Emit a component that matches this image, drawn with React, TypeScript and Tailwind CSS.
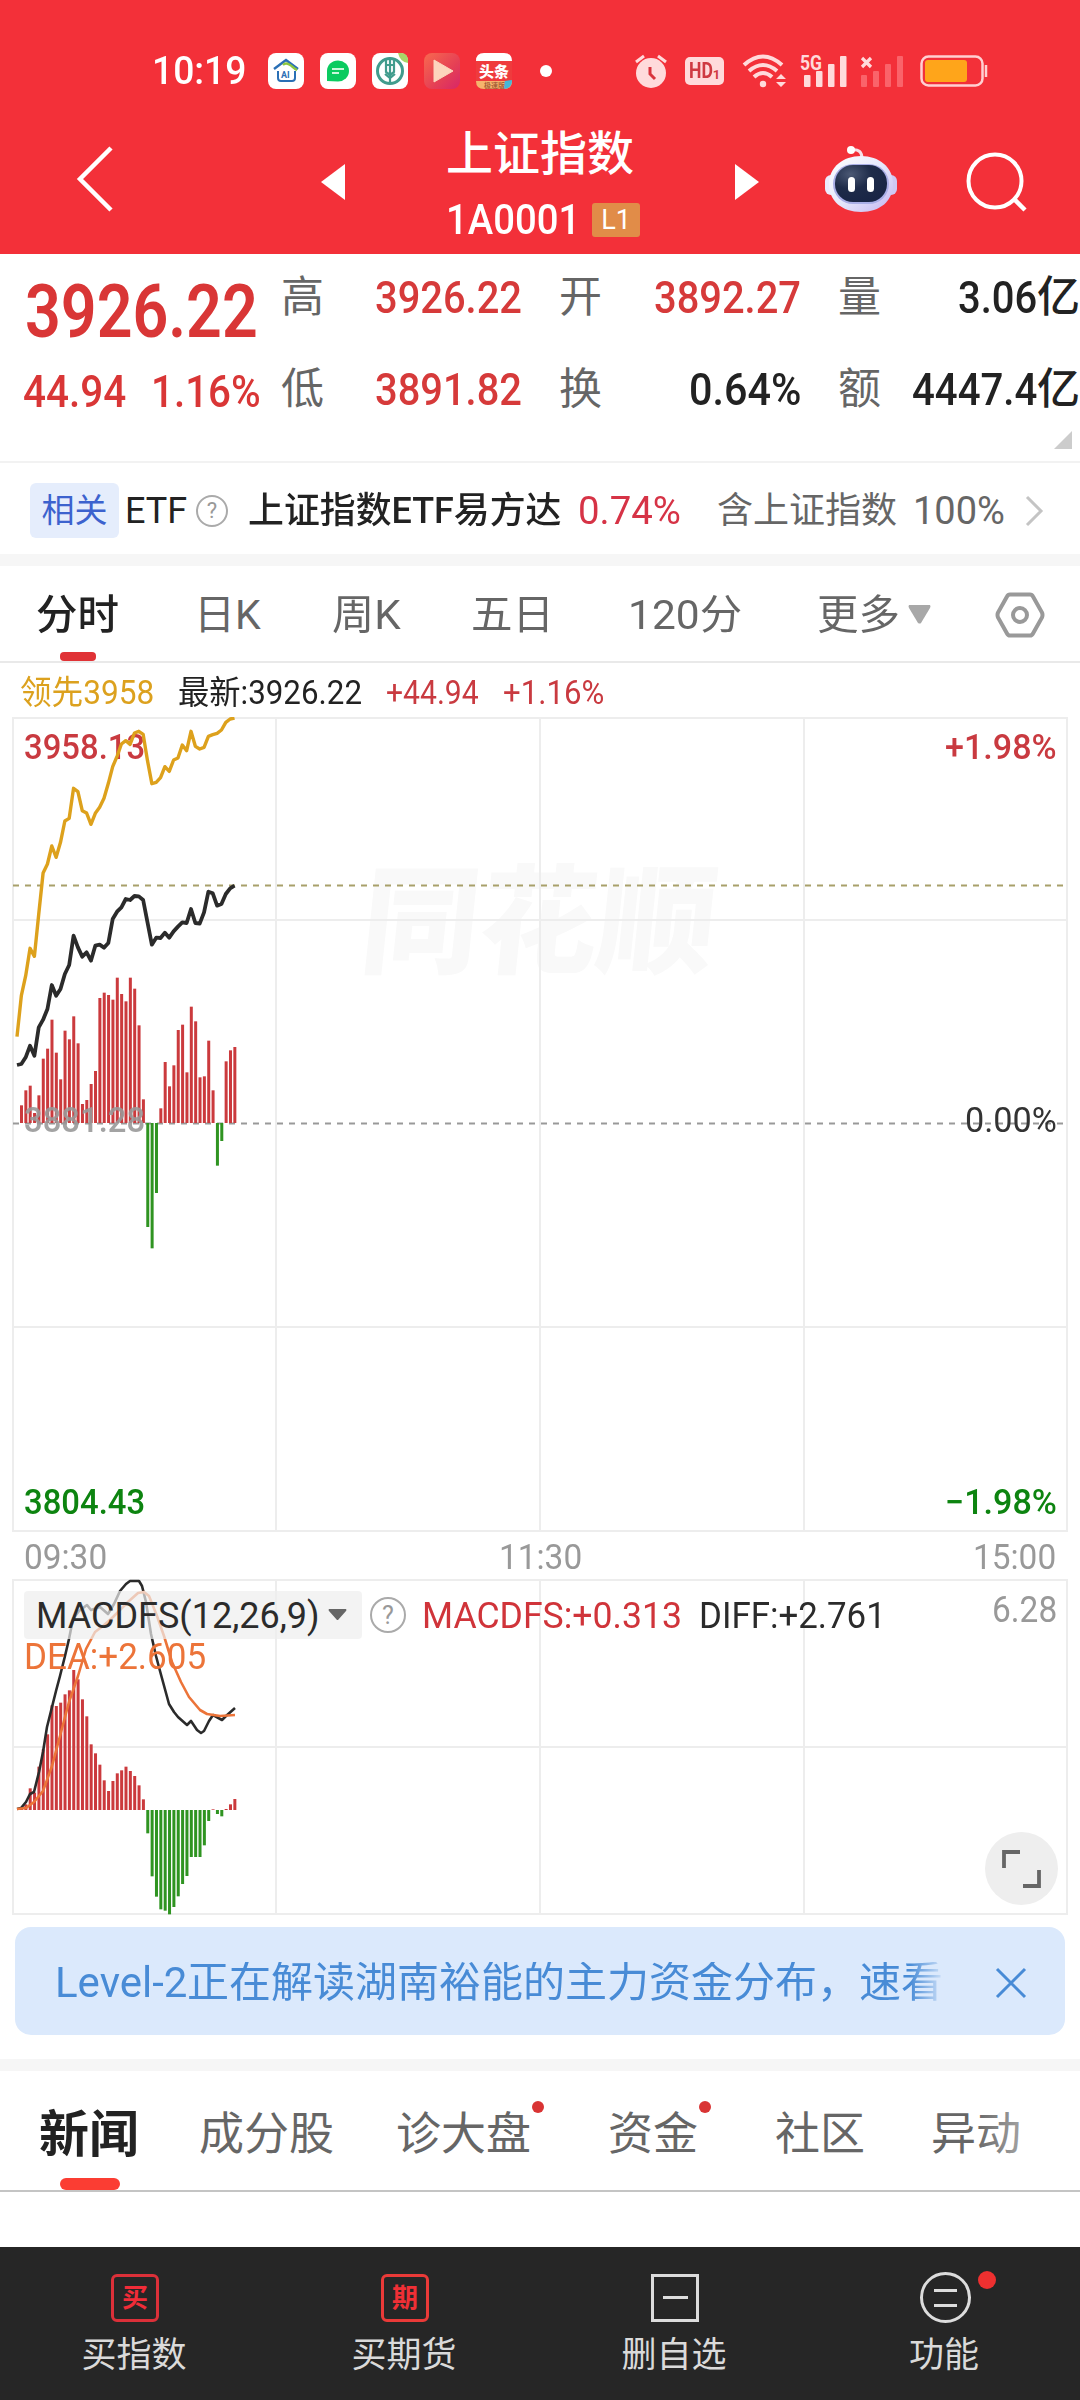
import { useLayoutEffect, useRef, useState } from 'react';
import type { ReactNode } from 'react';
import { clsx } from 'clsx';

// Minute lines, sampled once per minute from the left edge (3 units = 1px)
const LEAD = [
  1013, 890, 830, 748, 772, 645, 522, 495, 441, 475, 430, 366, 358, 268, 278, 335, 342, 376, 343, 325, 298, 253, 203, 172,
  135, 125, 136, 102, 97, 106, 185, 254, 250, 236, 203, 217, 183, 177, 138, 155, 97, 142, 150, 145, 112, 107, 103, 93, 70,
  60, 57,
];
const PRICE = [
  1098, 1095, 1075, 1040, 1070, 985, 962, 930, 858, 890, 870, 825, 798, 710, 745, 773, 760, 785, 740, 737, 746, 732, 660,
  638, 625, 600, 603, 591, 592, 603, 670, 737, 716, 717, 701, 716, 697, 683, 670, 672, 630, 672, 674, 640, 578, 583, 620,
  615, 585, 568, 560,
];
const FLOW = [
  53, 98, 112, 30, 83, 193, 223, 310, 211, 131, 277, 251, 320, 239, 57, 69, 117, 156, 375, 391, 384, 370, 436, 387, 365,
  436, 403, 293, 71, -312, -376, -210, 44, 183, 110, 173, 279, 295, 152, 349, 305, 137, 140, 247, 98, -128, -54, 185, 218,
  228,
];
const MACD = [
  7, 17, 65, 52, 130, 182, 227, 314, 312, 322, 347, 359, 420, 392, 332, 281, 197, 170, 136, 89, 57, 87, 110, 119, 130, 117,
  102, 74, 32, -70, -199, -260, -298, -302, -313, -291, -259, -222, -198, -141, -141, -141, -106, -33, 2, -12, -19, 3, 17,
  33,
];
const DIFF = [
  [17, 330], [21, 329], [26, 323], [30, 315], [34, 313], [39, 293], [43, 273], [47, 248], [52, 228], [56, 212], [60, 197],
  [65, 177], [69, 160], [73, 140], [79, 132], [87, 126], [91, 131], [100, 128], [108, 135], [114, 125], [120, 112],
  [126, 105], [130, 102], [139, 102], [142, 107], [146, 123], [151, 155], [156, 177], [160, 192], [169, 225], [174, 233],
  [178, 238], [187, 246], [191, 242], [197, 251], [201, 254], [204, 252], [209, 242], [213, 236], [222, 241], [226, 237],
  [235, 229],
];
const DEA = [
  [17, 330], [26, 329], [34, 323], [43, 312], [52, 287], [60, 257], [69, 223], [78, 197], [86, 170], [95, 153], [103, 147],
  [112, 139], [121, 130], [129, 122], [138, 114], [144, 113], [149, 117], [157, 137], [164, 157], [172, 183], [181, 203],
  [189, 218], [200, 231], [207, 235], [220, 237], [235, 236],
];

const minuteLine = (values: number[]) => values.map((v, i) => `${17 + i * 4.35},${v / 3 - 18}`).join(' ');

// Squeezes or stretches one line of text to the width of its box
function Fit({ className, children }: { className?: string; children: ReactNode }) {
  const box = useRef<HTMLSpanElement>(null);
  const text = useRef<HTMLSpanElement>(null);
  const [scale, setScale] = useState(1);

  useLayoutEffect(() => {
    if (box.current && text.current) {
      setScale(box.current.clientWidth / text.current.offsetWidth);
    }
  }, []);

  return (
    <span ref={box} className={clsx('inline-block shrink-0 whitespace-nowrap leading-none', className)}>
      <span ref={text} className="inline-block origin-left" style={{ transform: `scaleX(${scale})` }}>
        {children}
      </span>
    </span>
  );
}

function StatusBar() {
  return (
    <div className="flex h-[108px] items-center pt-[34px] pl-[152px]">
      <Fit className="w-[94px] text-[38px] font-medium">10:19</Fit>
      <div className="ml-[22px] flex gap-4">
        <svg className="size-9" viewBox="0 0 36 36" fill="none">
          <rect width="36" height="36" rx="8" fill="#fff" />
          <path d="M6 16 18 7l12 9" stroke="#2a6fb5" strokeWidth="2.4" />
          <path d="M15 12c3-3 5-1 7 0s4 4 7 5" stroke="#8cc63f" strokeWidth="2.4" />
          <path d="M10 18v7q0 3 3 3h11q3 0 3-3v-7" stroke="#2a6fb5" strokeWidth="2" />
          <text x="13" y="25" fontSize="9" fontWeight="700" fill="#2a6fb5">AI</text>
        </svg>
        <svg className="size-9" viewBox="0 0 36 36" fill="none">
          <rect width="36" height="36" rx="8" fill="#fff" />
          <path d="M7 28V18a11 10.500 0 1 1 11 10.500Z" fill="#0acb60" />
          <path d="M12 16h12M12 20h7" stroke="#c9f7dc" strokeWidth="2" />
        </svg>
        <svg className="size-9" viewBox="0 0 36 36" fill="none">
          <rect width="36" height="36" rx="8" fill="#fff" />
          <circle cx="18" cy="18" r="12.500" stroke="#419c8d" strokeWidth="3" />
          <path d="M18 4v27M14 5v14l4 3 4-3V5M13 21l5 4 5-4M14 12h8" stroke="#419c8d" strokeWidth="2.200" />
          <path d="M26 0h3q7 0 7 8v2q-8-1-10-10Z" fill="#a8d668" />
        </svg>
        <svg className="size-9" viewBox="0 0 36 36">
          <defs>
            <linearGradient id="video" x1="0" y1="0" x2="1" y2="1">
              <stop offset="0" stopColor="#f8694f" />
              <stop offset=".6" stopColor="#e53f55" />
              <stop offset="1" stopColor="#d82668" />
            </linearGradient>
          </defs>
          <rect width="36" height="36" rx="8" fill="url(#video)" />
          <path d="M10 7v22l19-11Z" fill="#fdd5bd" stroke="#fdd5bd" strokeLinejoin="round" />
        </svg>
        <svg className="size-9 overflow-visible" viewBox="0 0 36 36">
          <rect width="36" height="36" rx="8" fill="#ef3b3d" />
          <path d="M0 8Q0 0 8 0h20q8 0 8 8Z" fill="#fff" />
          <text x="3" y="24" fontSize="15" fontWeight="900" fill="#fff">头条</text>
          <path d="M0 28h36q0 8-8 8H8q-8 0-8-8Z" fill="#f5b46d" />
          <path d="m29 28 7-1q0 9-9 9Z" fill="#45b8d8" />
          <text x="8" y="34.500" fontSize="7" fontWeight="700" fill="#a8623a">极速版</text>
        </svg>
      </div>
      <span className="ml-7 size-3 rounded-full bg-white" />
      <div className="ml-[83px] flex items-center text-[#ffdadb]">
        <svg className="h-[34px] w-8" viewBox="0 0 32 34" fill="none" stroke="currentColor">
          <circle cx="16" cy="19" r="15" fill="currentColor" stroke="none" />
          <path d="m1 8 8-6M31 8l-8-6" strokeWidth="3" />
          <path d="M15 13v7l5 5" stroke="#d9333c" strokeWidth="3" />
        </svg>
        <div className="ml-[18px] flex h-7 w-[39px] items-center justify-center rounded-[5px] bg-[#ffdadb] text-[#cf3a42]">
          <Fit className="w-6 text-[22px] font-bold">HD</Fit>
          <span className="pt-1.5 text-[13px] font-bold leading-none">1</span>
        </div>
        <svg className="ml-[18px] h-[34px] w-[46px]" viewBox="0 0 46 34" fill="none" stroke="currentColor" strokeWidth="4">
          <path d="M2 11q19-17 38 0M7 17q14-12 28 0M12 23q9-8 18 0" />
          <circle cx="21" cy="30" r="3.200" fill="currentColor" stroke="none" />
          <path d="m34 25 5-5 5 5ZM34 28l5 5 5-5Z" fill="currentColor" stroke="none" />
        </svg>
        <svg className="ml-3 h-[34px] w-[48px] overflow-visible" viewBox="0 0 48 34" fill="currentColor">
          <text x="0" y="16" fontSize="21" fontWeight="700" textLength="22" lengthAdjust="spacingAndGlyphs">5G</text>
          <rect x="4" y="21" width="6.500" height="12" rx="1" />
          <rect x="16" y="17" width="6.500" height="16" rx="1" />
          <rect x="28" y="10" width="6.500" height="23" rx="1" />
          <rect x="40" y="2" width="6.500" height="31" rx="1" />
        </svg>
        <svg className="ml-3 h-[34px] w-[46px]" viewBox="0 0 46 34" fill="#fa636a">
          <path d="m2 4 9 9M11 4l-9 9" stroke="#ffdadb" strokeWidth="3.200" />
          <rect x="1" y="21" width="6" height="12" rx="1" />
          <rect x="13" y="17" width="6" height="16" rx="1" />
          <rect x="25" y="10" width="6" height="23" rx="1" />
          <rect x="37" y="2" width="6" height="31" rx="1" />
        </svg>
        <svg className="ml-[14px] h-[34px] w-[68px]" viewBox="0 0 68 34" fill="none">
          <rect x="1.500" y="2.500" width="61" height="29" rx="7" stroke="#ffd0d2" strokeWidth="2.500" />
          <rect x="5" y="6" width="42" height="22" rx="3" fill="#ffa51a" />
          <path d="M66 11v12" stroke="#ffd0d2" strokeWidth="2.500" />
        </svg>
      </div>
    </div>
  );
}

function TitleBar() {
  return (
    <div className="flex h-[145px]">
      <svg className="mt-[38px] ml-[76px] h-[66px] w-[37px]" viewBox="0 0 37 66" fill="none" stroke="#fff" strokeWidth="4.500">
        <path d="M35 2 4 33l31 31" />
      </svg>
      <svg className="mt-14 ml-[208px] h-9 w-6 fill-white" viewBox="0 0 24 36">
        <path d="M24 0v36L0 18Z" />
      </svg>
      <div className="ml-[101px] flex w-[190px] flex-col pt-[22px]">
        <Fit className="w-[188px] text-[47px] font-medium">上证指数</Fit>
        <div className="mt-[22px] flex items-center">
          <Fit className="w-[134px] text-[42px] font-medium">1A0001</Fit>
          <span className="ml-[12px] flex h-[34px] w-12 shrink-0 items-center justify-center rounded-[3px] bg-[#e18c48] text-[27px] leading-none">
            L1
          </span>
        </div>
      </div>
      <svg className="mt-14 ml-[99px] h-9 w-6 fill-white" viewBox="0 0 24 36">
        <path d="M0 0v36l24-18Z" />
      </svg>
      <svg className="mt-[38px] ml-[66px] h-[68px] w-[72px]" viewBox="0 0 72 68">
        <defs>
          <linearGradient id="head" x1="0" y1="0" x2="1" y2="1">
            <stop offset="0" stopColor="#fff" />
            <stop offset=".5" stopColor="#e6e8fc" />
            <stop offset="1" stopColor="#c3b5f0" />
          </linearGradient>
          <radialGradient id="visor" cx=".3" cy=".25" r=".8">
            <stop offset="0" stopColor="#4b5874" />
            <stop offset=".5" stopColor="#1e2b49" />
            <stop offset="1" stopColor="#192545" />
          </radialGradient>
        </defs>
        <path d="M26 4q11-2 11 9" fill="none" stroke="#f7dfe8" strokeWidth="3" />
        <circle cx="26" cy="4" r="4" fill="#fff" />
        <rect y="29" width="12" height="20" rx="6" fill="#eceafc" />
        <rect x="60" y="29" width="12" height="20" rx="6" fill="#cfc8f3" />
        <path d="M4 38C4 21 18 10 36 10s32 11 32 28-13 28-32 28S4 55 4 38Z" fill="url(#head)" />
        <rect x="8" y="18" width="56" height="40" rx="20" fill="#a9aee6" />
        <rect x="10" y="19" width="52" height="37" rx="18" fill="url(#visor)" />
        <rect x="23" y="31" width="7" height="15" rx="3.500" fill="#fff" />
        <rect x="42" y="31" width="7" height="15" rx="3.500" fill="#fff" />
      </svg>
      <svg className="mt-[43px] ml-[69px] h-[62px] w-[62px]" viewBox="0 0 62 62" fill="none" stroke="#fff" strokeWidth="4">
        <circle cx="29" cy="30" r="26.500" />
        <path d="m48 48 11 11" strokeWidth="4.500" />
      </svg>
    </div>
  );
}

function Stat({
  label,
  value,
  valueWidth,
  unit,
  up,
}: {
  label: string;
  value: string;
  valueWidth: string;
  unit?: string;
  up?: boolean;
}) {
  return (
    <div className="flex h-[92px] items-start justify-between">
      <span className="pt-px text-[43px] leading-none text-[#666]">{label}</span>
      <span className={clsx('flex items-start font-medium', up ? 'text-[#d63a3a]' : 'text-[#222]')}>
        <Fit className={clsx('text-[45px]', valueWidth)}>{value}</Fit>
        {unit && <span className="pt-px text-[43px] leading-none">{unit}</span>}
      </span>
    </div>
  );
}

function Quote() {
  return (
    <div className="relative flex h-[209px] border-b-2 border-[#f2f2f2] pt-[21px] pl-[25px]">
      <div className="w-[256px] font-medium text-[#d93636]">
        <Fit className="w-[233px] text-[74px] font-semibold">3926.22</Fit>
        <div className="mt-[21px] -ml-0.5 flex">
          <Fit className="w-[103px] text-[44px]">44.94</Fit>
          <Fit className="ml-[25px] w-[110px] text-[44px]">1.16%</Fit>
        </div>
      </div>
      <div className="w-[241px]">
        <Stat label="高" value="3926.22" valueWidth="w-[147px]" up />
        <Stat label="低" value="3891.82" valueWidth="w-[147px]" up />
      </div>
      <div className="ml-[37px] w-[242px]">
        <Stat label="开" value="3892.27" valueWidth="w-[147px]" up />
        <Stat label="换" value="0.64%" valueWidth="w-[112px]" />
      </div>
      <div className="ml-[37px] w-[242px]">
        <Stat label="量" value="3.06" valueWidth="w-[79px]" unit="亿" />
        <Stat label="额" value="4447.4" valueWidth="w-[125px]" unit="亿" />
      </div>
      <svg className="absolute right-2 bottom-3 size-[18px] fill-[#ccc]" viewBox="0 0 18 18">
        <path d="M18 0v18H0Z" />
      </svg>
    </div>
  );
}

function Help({ className }: { className: string }) {
  return (
    <span className={clsx('flex shrink-0 items-center justify-center rounded-full border-2 border-[#aaa] leading-none text-[#999]', className)}>
      ?
    </span>
  );
}

function RelatedFund() {
  return (
    <div className="flex h-[91px] items-center pt-1 pl-[30px] text-[#222]">
      <span className="flex h-[55px] w-[89px] items-center justify-center rounded-md bg-[#e5edfc] text-[33px] text-[#3c62ce]">相关</span>
      <Fit className="ml-[6px] w-[62px] text-[36px]">ETF</Fit>
      <Help className="ml-[9px] size-8 text-[22px]" />
      <Fit className="ml-5 w-[313px] text-[36px] font-medium">上证指数ETF易方达</Fit>
      <Fit className="ml-[17px] w-[103px] text-[38px] text-[#d63346]">0.74%</Fit>
      <Fit className="ml-[36px] w-[180px] text-[36px] text-[#666]">含上证指数</Fit>
      <Fit className="ml-[16px] w-[92px] text-[38px] text-[#666]">100%</Fit>
      <svg className="ml-[20px] h-8 w-[19px]" viewBox="0 0 19 32" fill="none" stroke="#c4c4c4" strokeWidth="3">
        <path d="m2 2 14 14L2 30" />
      </svg>
    </div>
  );
}

function PeriodTabs() {
  return (
    <div className="relative flex h-[97px] items-center border-b-2 border-[#e9e9e9] pt-0.5 pl-[36px] text-[41px] text-[#666]">
      <Fit className="w-[83px] pt-0.5 font-medium text-[#222]">分时</Fit>
      <Fit className="ml-[75px] w-[67px] pt-0.5">日K</Fit>
      <Fit className="ml-[71px] w-[69px] pt-0.5">周K</Fit>
      <Fit className="ml-[70px] w-[83px] pt-0.5">五日</Fit>
      <Fit className="ml-[74px] w-[114px] pt-0.5">120分</Fit>
      <Fit className="ml-[75px] w-[83px] pt-0.5">更多</Fit>
      <svg className="ml-[8px] h-[19px] w-[23px] fill-[#a8a8a8]" viewBox="0 0 23 19">
        <path d="M1 0h21q1 1 0 3l-9 15q-1 1-3 0L1 3Q0 1 1 0Z" />
      </svg>
      <svg className="ml-[64px] h-[46px] w-[50px]" viewBox="0 0 50 46" fill="none" stroke="#999" strokeWidth="4">
        <path d="M15 2.500h20q2 0 3 2l9 16q1 2.500 0 5l-9 16q-1 2-3 2H15q-2 0-3-2L3 25.500q-1-2.500 0-5l9-16q1-2 3-2Z" />
        <circle cx="25" cy="23" r="7" />
      </svg>
      <span className="absolute bottom-0 left-[60px] h-[9px] w-9 rounded bg-[#e03236]" />
    </div>
  );
}

function Grid({ height, rows }: { height: number; rows: number[] }) {
  return (
    <g stroke="#ededed" strokeWidth="2" fill="none">
      <rect x="13" y="1" width="1054" height={height - 2} />
      <path d={[276, 540, 804].map((x) => `M${x} 0V${height}`).join('')} />
      <path d={rows.map((y) => `M13 ${y}H1067`).join('')} />
    </g>
  );
}

function Bars({ values, zero }: { values: number[]; zero: number }) {
  return (
    <>
      {values.map((v, i) => (
        <rect
          key={i}
          x={20 + i * 4.354}
          y={v > 0 ? zero - v / 3 : zero}
          width="3"
          height={Math.abs(v) / 3}
          fill={v > 0 ? '#cb3a3d' : '#2f9421'}
        />
      ))}
    </>
  );
}

function MinuteChart() {
  return (
    <div className="relative h-[815px] font-medium">
      <span className="absolute top-[148px] left-[362px] -skew-x-6 text-[118px] font-black leading-none text-[#f9f9f9]">
        同花顺
      </span>
      <svg className="absolute inset-0" width="1080" height="815" viewBox="0 0 1080 815" fill="none">
        <Grid height={815} rows={[203, 610]} />
        <path d="M13 406.500H1067" stroke="#999" strokeWidth="1.800" strokeDasharray="6 6" />
        <path d="M13 168.500H1067" stroke="#a8a06a" strokeWidth="1.800" strokeDasharray="6 6" />
      </svg>
      <Fit className="absolute top-[13px] left-6 w-[121px] text-[35px] text-[#c93a40]">3958.13</Fit>
      <svg className="absolute inset-0" width="1080" height="815" viewBox="0 0 1080 815" fill="none">
        <Bars values={FLOW} zero={406} />
        <polyline points={minuteLine(LEAD)} stroke="#dda11c" strokeWidth="3.400" strokeLinejoin="round" />
        <polyline points={minuteLine(PRICE)} stroke="#2b2b2b" strokeWidth="3.800" strokeLinejoin="round" />
      </svg>
      <Fit className="absolute top-[386px] left-6 w-[121px] text-[35px] text-[#999]/90">3881.28</Fit>
      <Fit className="absolute bottom-[12px] left-6 w-[121px] text-[35px] text-[#0d8410]">3804.43</Fit>
      <Fit className="absolute top-[13px] right-[23px] w-[112px] text-[35px] text-[#c93a40]">+1.98%</Fit>
      <Fit className="absolute top-[386px] right-[23px] w-[92px] text-[35px] font-normal text-[#333]">0.00%</Fit>
      <Fit className="absolute bottom-[12px] right-[23px] w-[112px] text-[35px] text-[#0d8410]">−1.98%</Fit>
    </div>
  );
}

function MacdChart() {
  return (
    <div className="relative h-[336px]">
      <svg className="absolute inset-0" width="1080" height="336" viewBox="0 100 1080 336" fill="none">
        <g transform="translate(0 100)">
          <Grid height={336} rows={[168]} />
        </g>
        <Bars values={MACD} zero={331} />
        <polyline points={DIFF.map((p) => p.join(',')).join(' ')} stroke="#2b2b2b" strokeWidth="2.600" strokeLinejoin="round" />
        <polyline points={DEA.map((p) => p.join(',')).join(' ')} stroke="#ec7439" strokeWidth="2.600" strokeLinejoin="round" />
      </svg>
      <div className="relative flex items-center pt-3 pl-6 text-[36px]">
        <div className="flex h-12 w-[338px] items-center rounded bg-[#eee]/70 pl-3 text-[#2b2b2b]">
          <Fit className="w-[284px] pt-0.5">MACDFS(12,26,9)</Fit>
          <svg className="ml-[8px] h-3 w-[19px] fill-[#666]" viewBox="0 0 19 12">
            <path d="M1 0h17q1 1 0 2l-8 9H9L1 2Q0 1 1 0Z" />
          </svg>
        </div>
        <Help className="ml-2 size-9 text-[25px]" />
        <Fit className="ml-4 w-[260px] pt-0.5 text-[#d0343a]">MACDFS:+0.313</Fit>
        <Fit className="ml-[17px] w-[187px] pt-0.5 text-[#2b2b2b]">DIFF:+2.761</Fit>
        <Fit className="mb-2.5 ml-[106px] w-[65px] text-[#999]">6.28</Fit>
      </div>
      <Fit className="relative ml-6 w-[182px] text-[36px] text-[#ec7439]">DEA:+2.605</Fit>
      <svg className="absolute right-[22px] bottom-[10px] size-[73px]" viewBox="0 0 73 73" fill="none">
        <circle cx="36.500" cy="36.500" r="36.500" fill="#eee" />
        <path d="M19 36V20h16M54 38v16H38" stroke="#666" strokeWidth="3.800" />
      </svg>
    </div>
  );
}

function Charts() {
  return (
    <div>
      <div className="flex h-[54px] items-center pt-1 pl-5 text-[33px]">
        <Fit className="w-[134px] text-[#dca11e]">领先3958</Fit>
        <Fit className="ml-[24px] w-[184px] text-[#222]">最新:3926.22</Fit>
        <Fit className="ml-[24px] w-[93px] text-[#c93a40]">+44.94</Fit>
        <Fit className="ml-[24px] w-[101px] text-[#c93a40]">+1.16%</Fit>
      </div>
      <MinuteChart />
      <div className="flex h-[47px] items-center justify-between pt-1 pr-6 pl-6 text-[35px] text-[#999]">
        <Fit className="w-[83px]">09:30</Fit>
        <Fit className="w-[83px]">11:30</Fit>
        <Fit className="w-[83px]">15:00</Fit>
      </div>
      <MacdChart />
    </div>
  );
}

function Banner() {
  return (
    <div className="mx-[15px] mt-3 flex h-[108px] items-center rounded-2xl bg-[#dbe9fc] pt-1 pl-10 text-[42px] text-[#488bd6]">
      <div className="flex w-[900px] mask-r-from-95% mask-r-to-99%">
        <Fit className="w-[132px]">Level-2</Fit>
        <Fit className="w-[756px]">正在解读湖南裕能的主力资金分布，速看</Fit>
      </div>
      <svg className="ml-10 size-8" viewBox="0 0 32 32" fill="none" stroke="#488bd6" strokeWidth="3">
        <path d="m2 2 28 28M30 2 2 30" />
      </svg>
    </div>
  );
}

const newsTabs = [
  { label: '成分股', className: 'ml-[60px] w-[135px]' },
  { label: '诊大盘', className: 'ml-[62px] w-[135px]', dot: true },
  { label: '资金', className: 'ml-[77px] w-[90px]', dot: true },
  { label: '社区', className: 'ml-[77px] w-[90px]' },
  { label: '异动', className: 'ml-[66px] w-[90px]' },
];

function NewsTabs() {
  return (
    <div className="relative flex h-[121px] items-center border-b-2 border-[#c4c4c4] pt-2 pl-[39px] text-[45px] leading-none text-[#666]">
      <span className="w-[100px] text-[50px] font-bold text-[#222]">新闻</span>
      {newsTabs.map((tab) => (
        <span key={tab.label} className={clsx('relative whitespace-nowrap', tab.className)}>
          {tab.label}
          {tab.dot && <span className="absolute -top-[11px] -right-[13px] size-3 rounded-full bg-[#d93434]" />}
        </span>
      ))}
      <span className="absolute top-0 right-[58px] h-full w-12 bg-linear-to-r from-white/0 to-white/40" />
      <span className="absolute bottom-0 left-[60px] h-3 w-[60px] rounded-full bg-[#fb3d33]" />
    </div>
  );
}

function BottomNav() {
  const items = [
    {
      label: '买指数',
      icon: (
        <span className="flex size-12 items-center justify-center rounded-md border-3 border-[#dc3039] text-[26px] font-bold leading-none text-[#f02c38]">
          买
        </span>
      ),
    },
    {
      label: '买期货',
      icon: (
        <span className="flex size-12 items-center justify-center rounded-md border-3 border-[#ea3a38] text-[26px] font-bold leading-none text-[#f02f35]">
          期
        </span>
      ),
    },
    {
      label: '删自选',
      icon: (
        <span className="flex size-12 items-center justify-center border-3 border-[#dcdcdc]">
          <span className="h-[3px] w-[25px] bg-[#dcdcdc]" />
        </span>
      ),
    },
    {
      label: '功能',
      icon: (
        <span className="relative flex size-[51px] flex-col items-center justify-center gap-3 rounded-full border-3 border-[#dcdcdc]">
          <span className="h-[3px] w-[23px] bg-[#dcdcdc]" />
          <span className="h-[3px] w-[23px] bg-[#dcdcdc]" />
          <span className="absolute -top-1 -right-[28px] size-[18px] rounded-full bg-[#ee3030]" />
        </span>
      ),
    },
  ];

  return (
    <nav className="mt-auto grid h-[153px] grid-cols-4 bg-[#262626] text-[35px] leading-none text-[#dadada]">
      {items.map((item) => (
        <div key={item.label} className="flex flex-col items-center pt-[25px]">
          <div className="flex h-[51px] items-center">{item.icon}</div>
          <span className="mt-[15px] -ml-0.5">{item.label}</span>
        </div>
      ))}
    </nav>
  );
}

export default function App() {
  return (
    <div className="flex h-[2400px] w-[1080px] flex-col overflow-hidden bg-white font-[Roboto,'Noto_Sans_CJK_SC',sans-serif]">
      <header className="h-[254px] bg-[#f33039] text-white">
        <StatusBar />
        <TitleBar />
      </header>
      <Quote />
      <RelatedFund />
      <div className="h-3 bg-[#f6f6f6]" />
      <PeriodTabs />
      <Charts />
      <Banner />
      <div className="mt-6 h-3 bg-[#f6f6f6]" />
      <NewsTabs />
      <BottomNav />
    </div>
  );
}
